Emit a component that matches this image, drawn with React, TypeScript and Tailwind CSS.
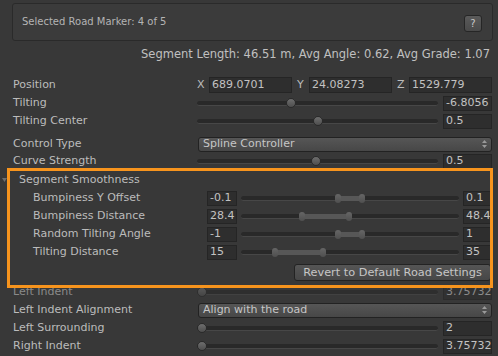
import React from "react";

type Range = { min: string; max: string; from: number; to: number };

const smoothness: (Range & { label: string })[] = [
  { label: "Bumpiness Y Offset", min: "-0.1", max: "0.1", from: 0.429, to: 0.571 },
  { label: "Bumpiness Distance", min: "28.4", max: "48.4", from: 0.265, to: 0.511 },
  { label: "Random Tilting Angle", min: "-1", max: "1", from: 0.429, to: 0.571 },
  { label: "Tilting Distance", min: "15", max: "35", from: 0.142, to: 0.388 },
];

function Field({ value, className = "" }: { value: string; className?: string }) {
  return (
    <div
      className={`flex items-center overflow-hidden whitespace-nowrap border border-[#252525] bg-[#2e2e2e] px-[2px] text-[#c2c2c2] ${className}`}
    >
      {value}
    </div>
  );
}

function Groove() {
  return <div className="h-[5px] w-full rounded-full border-b border-[#474747] bg-[#292929]" />;
}

function Slider({ value, at, dim }: { value: string; at: number; dim?: boolean }) {
  return (
    <div className={`flex flex-1 items-center gap-[5px] ${dim ? "opacity-60" : ""}`}>
      <div className="relative flex h-[10px] flex-1 items-center">
        <Groove />
        <div
          className="absolute top-0 h-[10px] w-[10px] rounded-full border border-[#2a2a2a] bg-gradient-to-b from-[#6e6e6e] to-[#4e4e4e]"
          style={{ left: `calc(${at * 100}% - ${at * 10}px)` }}
        />
      </div>
      <Field value={value} className="h-[15px] w-[49px]" />
    </div>
  );
}

function UpDown() {
  return (
    <svg width="5" height="8" viewBox="0 0 5 8" className="shrink-0">
      <path d="M2.5 0 L5 3 L0 3 Z M0 5 L5 5 L2.5 8 Z" fill="#9a9a9a" />
    </svg>
  );
}

function Dropdown({ value }: { value: string }) {
  return (
    <div className="ml-[1px] flex h-[15px] flex-1 items-center justify-between rounded-[3px] border border-[#222] bg-gradient-to-b from-[#565656] to-[#474747] pl-[4px] pr-[4px] text-[#c6c6c6]">
      <span>{value}</span>
      <UpDown />
    </div>
  );
}

function Row({
  label,
  children,
  className = "",
  labelClass = "",
}: {
  label: string;
  children: React.ReactNode;
  className?: string;
  labelClass?: string;
}) {
  return (
    <div className={`flex h-[16px] items-center ${className}`}>
      <div className={`w-[197px] shrink-0 whitespace-nowrap pl-[13px] ${labelClass}`}>{label}</div>
      {children}
    </div>
  );
}

function MinMaxRow({ label, min, max, from, to }: Range & { label: string }) {
  return (
    <div className="mb-[2px] flex h-[16px] items-center">
      <div className="w-[207px] shrink-0 whitespace-nowrap pl-[33px]">{label}</div>
      <Field value={min} className="h-[15px] w-[30px]" />
      <div className="relative mx-[4px] flex h-[10px] flex-1 items-center">
        <Groove />
        <div
          className="absolute top-[0.5px] h-[9px]"
          style={{ left: `${from * 100}%`, width: `${(to - from) * 100}%` }}
        >
          <div className="absolute inset-x-[3px] top-[2px] h-[5px] bg-[#575757]" />
          <div className="absolute left-0 top-0 h-[9px] w-[6px] rounded-[3px] bg-gradient-to-b from-[#666] to-[#4f4f4f]" />
          <div className="absolute right-0 top-0 h-[9px] w-[6px] rounded-[3px] bg-gradient-to-b from-[#666] to-[#4f4f4f]" />
        </div>
      </div>
      <Field value={max} className="h-[15px] w-[29px]" />
    </div>
  );
}

export default function App() {
  return (
    <div className="relative h-[356px] w-[498px] overflow-hidden bg-[#383838] pt-[3px] font-['DejaVu_Sans',sans-serif] text-[11px] leading-[16px] text-[#bcbcbc]">
      <div className="ml-[12px] mr-[5px] flex h-[38px] items-center justify-between rounded-[3px] border border-[#2a2a2a] bg-[#3b3b3b] pl-[9px] pr-[10px]">
        <span className="text-[10px] text-[#b4b4b4]">Selected Road Marker: 4 of 5</span>
        <div className="mt-[3px] flex h-[17px] w-[18px] items-center justify-center rounded-[3px] border border-[#262626] bg-gradient-to-b from-[#5a5a5a] to-[#4a4a4a] text-[10px] text-[#c8c8c8]">
          ?
        </div>
      </div>

      <div className="mt-[5px] h-[16px] pr-[8px] text-right text-[11.5px] text-[#c0c0c0]">
        Segment Length: 46.51 m, Avg Angle: 0.62, Avg Grade: 1.07
      </div>

      <div className="mt-[15px] pr-[6px]">
        <Row label="Position" className="mb-[2px]">
          <div className="flex flex-1 gap-[5px]">
            {[
              ["X", "689.0701"],
              ["Y", "24.08273"],
              ["Z", "1529.779"],
            ].map(([axis, v]) => (
              <div key={axis} className="flex flex-1 items-center">
                <span className="w-[12px] shrink-0">{axis}</span>
                <Field value={v} className="h-[16px] flex-1" />
              </div>
            ))}
          </div>
        </Row>
        <Row label="Tilting" className="mb-[2px]">
          <Slider value="-6.8056" at={0.385} />
        </Row>
        <Row label="Tilting Center" className="mb-[2px]">
          <Slider value="0.5" at={0.5} />
        </Row>
        {/* margins collapse with the row above, so mt is the whole gap */}
        <Row label="Control Type" className="mb-[1px] mt-[7px]">
          <Dropdown value="Spline Controller" />
        </Row>
        <Row label="Curve Strength" className="mb-[2px]">
          <Slider value="0.5" at={0.495} />
        </Row>

        <div className="mb-[2px] mt-[3px] flex h-[16px] items-center pl-[2px]">
          <svg width="5" height="4" viewBox="0 0 5 4" className="mr-[12px]">
            <path d="M0 0 L5 0 L2.5 4 Z" fill="#6f6f6f" />
          </svg>
          <span>Segment Smoothness</span>
        </div>
        {smoothness.map((r) => (
          <MinMaxRow key={r.label} {...r} />
        ))}
        <div className="mb-[3px] mt-[4px] flex justify-end">
          <div className="mr-[1px] flex h-[17px] w-[197px] items-center justify-center rounded-[3px] border border-[#232323] bg-gradient-to-b from-[#555] to-[#474747] text-[11.3px] text-[#c6c6c6]">
            Revert to Default Road Settings
          </div>
        </div>

        <Row label="Left Indent" className="mb-[2px]" labelClass="text-[#8a8a8a]">
          <Slider value="3.75732" at={0} dim />
        </Row>
        <Row label="Left Indent Alignment" className="mb-[2px]">
          <Dropdown value="Align with the road" />
        </Row>
        <Row label="Left Surrounding" className="mb-[2px]">
          <Slider value="2" at={0} />
        </Row>
        <Row label="Right Indent" className="mb-[2px]">
          <Slider value="3.75732" at={0} />
        </Row>
      </div>

      <div className="pointer-events-none absolute left-[7px] top-[168px] h-[120px] w-[486px] border-[3px] border-[#f7941d]" />
    </div>
  );
}
